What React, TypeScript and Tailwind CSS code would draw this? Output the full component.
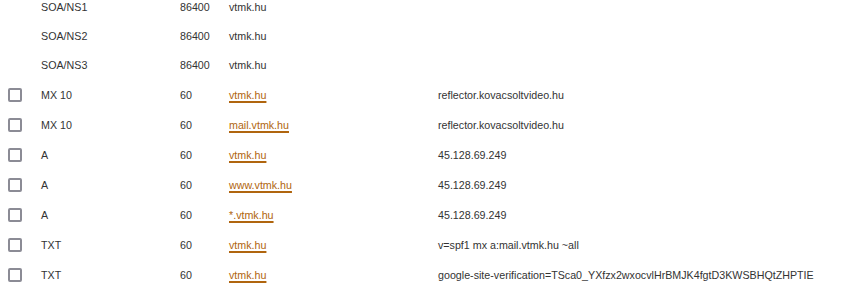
type Rec = { type: string; ttl: string; name: string; value: string; locked?: boolean };

const records: Rec[] = [
  { type: 'SOA/NS1', ttl: '86400', name: 'vtmk.hu', value: '', locked: true },
  { type: 'SOA/NS2', ttl: '86400', name: 'vtmk.hu', value: '', locked: true },
  { type: 'SOA/NS3', ttl: '86400', name: 'vtmk.hu', value: '', locked: true },
  { type: 'MX 10', ttl: '60', name: 'vtmk.hu', value: 'reflector.kovacsoltvideo.hu' },
  { type: 'MX 10', ttl: '60', name: 'mail.vtmk.hu', value: 'reflector.kovacsoltvideo.hu' },
  { type: 'A', ttl: '60', name: 'vtmk.hu', value: '45.128.69.249' },
  { type: 'A', ttl: '60', name: 'www.vtmk.hu', value: '45.128.69.249' },
  { type: 'A', ttl: '60', name: '*.vtmk.hu', value: '45.128.69.249' },
  { type: 'TXT', ttl: '60', name: 'vtmk.hu', value: 'v=spf1 mx a:mail.vtmk.hu ~all' },
  { type: 'TXT', ttl: '60', name: 'vtmk.hu', value: 'google-site-verification=TSca0_YXfzx2wxocvlHrBMJK4fgtD3KWSBHQtZHPTIE' },
];

const App = () => {
  return (
    <div className="w-[859px] h-[290px] overflow-hidden bg-white text-[10.7px] text-[#333] font-['Liberation_Sans',Arial,sans-serif]">
      <div className="-mt-[7px]">
        {records.map((r, i) => (
          <div key={i} className={`flex items-center ${r.locked ? 'h-[29px]' : 'h-[30px]'}`}>
            <div className="w-[41px] pl-[8px] flex items-center">
              {!r.locked && (
                <span className="block w-[14px] h-[14px] rounded-[2px] border-2 border-[#8b8b95] bg-white" />
              )}
            </div>
            <div className="w-[139px]">{r.type}</div>
            <div className="w-[49px]">{r.ttl}</div>
            <div className="w-[209px]">
              {r.locked ? (
                <span>{r.name}</span>
              ) : (
                <a href="#" className="text-[#b0650e] underline decoration-[#b0650e] decoration-[1.5px] underline-offset-[2px]">
                  {r.name}
                </a>
              )}
            </div>
            <div className="flex-1 whitespace-nowrap">{r.value}</div>
          </div>
        ))}
      </div>
    </div>
  );
};

export default App;
